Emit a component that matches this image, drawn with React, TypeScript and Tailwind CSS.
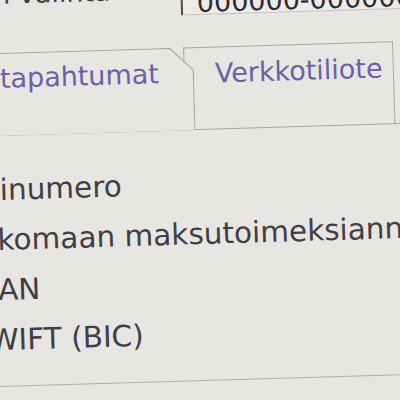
const rows = ["Tilinumero", "Ulkomaan maksutoimeksiannot", "IBAN", "SWIFT (BIC)"];

export default function App() {
  return (
    <div
      className="w-[400px] h-[400px] overflow-hidden bg-[#e8e6e3]"
      style={{ fontFamily: '"DejaVu Sans", Verdana, sans-serif' }}
    >
      <div className="w-[460px] h-[400px] -ml-[30px] rotate-[-1.7deg] origin-center">
        {/* account picker row, mostly scrolled off the top */}
        <div className="flex h-[36px] -mt-[21px]">
          <div className="w-[216px] pr-[70px] flex justify-end text-[27px] leading-[20px] text-[#3f3b40] whitespace-nowrap overflow-hidden">
            <span className="shrink-0">Tilin valinta</span>
          </div>
          <div className="flex-1 border-l-2 border-l-[#5c4a44] border-b border-b-[#c6c2c4] bg-[#ecebe9] pl-[14px] text-[27px] leading-[48px] text-[#2f2c30] whitespace-nowrap overflow-hidden">
            000000-00000000
          </div>
        </div>

        {/* tabs */}
        <div className="flex mt-[32px] h-[83px] border-b border-[#a9a4a9]">
          <div className="relative z-10 w-[227px] shrink-0">
            <svg className="absolute inset-0" width="227" height="83" viewBox="0 0 227 83">
              <polygon points="-2,0.5 203.5,0.5 226.5,23 226.5,83 -2,83" fill="#e8e6e3" />
              <polyline
                points="-2,0.5 203.5,0.5 226.5,23 226.5,83"
                fill="none"
                stroke="#a9a4a9"
                strokeWidth="1.2"
              />
            </svg>
            <div className="relative flex justify-end pr-[35px] pt-[1px] text-[27px] leading-[50px] text-[#6c61a6] whitespace-nowrap">
              <span className="shrink-0">Tilitapahtumat</span>
            </div>
          </div>
          <div className="w-[210px] -ml-[10px] shrink-0 border-t border-x border-[#a9a4a9] pl-[30px] pt-[1px] text-[27px] leading-[50px] text-[#6c61a6] whitespace-nowrap">
            Verkkotiliote
          </div>
        </div>

        {/* account details */}
        <div className="pt-[29px] pb-[21px] border-b border-[#b2aeb0]">
          {rows.map((label) => (
            <div
              key={label}
              className="h-[50px] -ml-[4px] text-[29.5px] leading-[50px] text-[#423e43] whitespace-nowrap"
            >
              {label}
            </div>
          ))}
        </div>
      </div>
    </div>
  );
}
